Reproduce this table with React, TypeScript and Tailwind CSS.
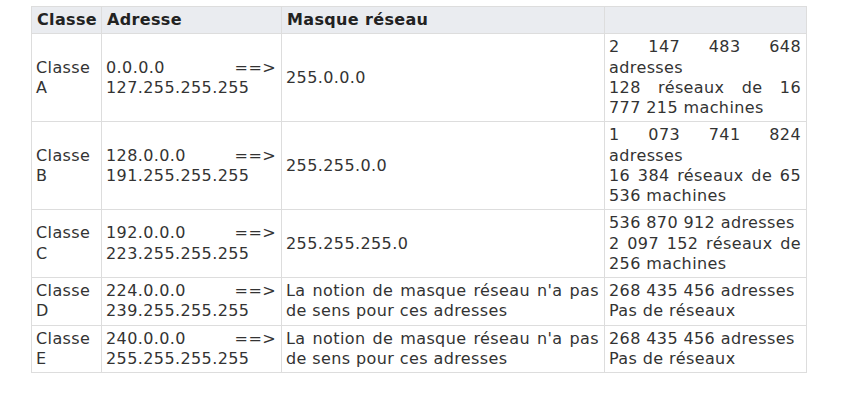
import React from "react";

type Cell = string[][];

const rows: Cell[][] = [
  [
    [["Classe", "A"]],
    [["0.0.0.0 ==>", "127.255.255.255"]],
    [["255.0.0.0"]],
    [["2 147 483 648", "adresses"], ["128 réseaux de 16", "777 215 machines"]],
  ],
  [
    [["Classe", "B"]],
    [["128.0.0.0 ==>", "191.255.255.255"]],
    [["255.255.0.0"]],
    [["1 073 741 824", "adresses"], ["16 384 réseaux de 65", "536 machines"]],
  ],
  [
    [["Classe", "C"]],
    [["192.0.0.0 ==>", "223.255.255.255"]],
    [["255.255.255.0"]],
    [["536 870 912 adresses"], ["2 097 152 réseaux de", "256 machines"]],
  ],
  [
    [["Classe", "D"]],
    [["224.0.0.0 ==>", "239.255.255.255"]],
    [["La notion de masque réseau n'a pas", "de sens pour ces adresses"]],
    [["268 435 456 adresses"], ["Pas de réseaux"]],
  ],
  [
    [["Classe", "E"]],
    [["240.0.0.0 ==>", "255.255.255.255"]],
    [["La notion de masque réseau n'a pas", "de sens pour ces adresses"]],
    [["268 435 456 adresses"], ["Pas de réseaux"]],
  ],
];

const td = "border border-[#dddddd] pl-[4px] pr-[5px] py-[3px] align-middle text-left";
const th = "border border-[#dddddd] pl-[5px] pr-[5px] py-[3px] text-left font-bold text-[#222] tracking-[0.35px]";

function CellContent({ cell }: { cell: Cell }) {
  return (
    <>
      {cell.map((para, pi) =>
        para.map((line, li) => (
          <div
            key={`${pi}-${li}`}
            className={li < para.length - 1 ? "text-justify [text-align-last:justify]" : "text-left"}
          >
            {line}
          </div>
        ))
      )}
    </>
  );
}

export default function App() {
  return (
    <div className="w-[848px] h-[409px] bg-white pt-[6px] pl-[31px]" style={{ fontFamily: '"DejaVu Sans", Verdana, sans-serif' }}>
      <table className="table-fixed border-collapse w-[775px] text-[16px] leading-[20.25px] text-[#333] tracking-[0.4px]">
        <colgroup>
          <col className="w-[70px]" />
          <col className="w-[180px]" />
          <col className="w-[323px]" />
          <col className="w-[202px]" />
        </colgroup>
        <thead>
          <tr className="bg-[#eaecf0]">
            <th className={th}>Classe</th>
            <th className={th}>Adresse</th>
            <th className={th}>Masque réseau</th>
            <th className={th}></th>
          </tr>
        </thead>
        <tbody>
          {rows.map((r, ri) => (
            <tr key={ri}>
              {r.map((c, ci) => (
                <td key={ci} className={td}>
                  <CellContent cell={c} />
                </td>
              ))}
            </tr>
          ))}
        </tbody>
      </table>
    </div>
  );
}
